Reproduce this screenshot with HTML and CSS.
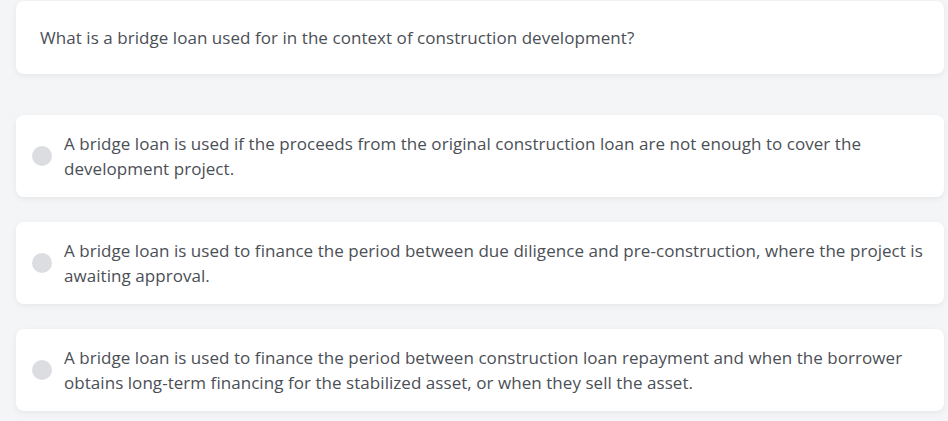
FILE: index.html
```html
<!DOCTYPE html>
<html lang="en">
<head>
  <meta charset="UTF-8">
  <meta name="viewport" content="width=device-width,initial-scale=1.0">
  <title>Quiz question</title>
  <link rel="stylesheet" href="styles.css">
</head>
<body>
  <div class="quiz">
    <div class="question-card">
      What is a bridge loan used for in the context of construction development?
    </div>

    <ul class="options">
      <li class="option">
        <span class="radio"></span>
        <span class="option-text">A bridge loan is used if the proceeds from the original construction loan are not enough to cover the development project.</span>
      </li>
      <li class="option">
        <span class="radio"></span>
        <span class="option-text">A bridge loan is used to finance the period between due diligence and pre-construction, where the project is awaiting approval.</span>
      </li>
      <li class="option">
        <span class="radio"></span>
        <span class="option-text">A bridge loan is used to finance the period between construction loan repayment and when the borrower obtains long-term financing for the stabilized asset, or when they sell the asset.</span>
      </li>
    </ul>
  </div>
</body>
</html>
```

FILE: styles.css
```css
body {
  margin: 0;
  padding: 0;
  background-color: #f4f5f7;
  color: #4b4f56;
  font-family: "Open Sans", "Noto Sans", Arial, sans-serif;
  font-size: 17px;
  letter-spacing: 0.05px;
}

.quiz {
  padding: 1px 4px 10px 16px;
}

.question-card {
  background-color: #ffffff;
  border-radius: 8px;
  box-shadow: 0px 2px 6px rgba(0, 0, 0, 0.06);
  padding: 24px;
  line-height: 25px;
}

.options {
  list-style: none;
  margin: 41px 0 0 0;
  padding: 0;
  display: flex;
  flex-direction: column;
  gap: 25px;
}

.option {
  display: flex;
  align-items: center;
  gap: 12px;
  background-color: #ffffff;
  border-radius: 8px;
  box-shadow: 0px 2px 6px rgba(0, 0, 0, 0.06);
  padding: 16px;
  cursor: pointer;
}

.radio {
  flex: none;
  width: 20px;
  height: 20px;
  border-radius: 50%;
  background-color: #dcdde0;
}

.option-text {
  line-height: 25px;
}
```
